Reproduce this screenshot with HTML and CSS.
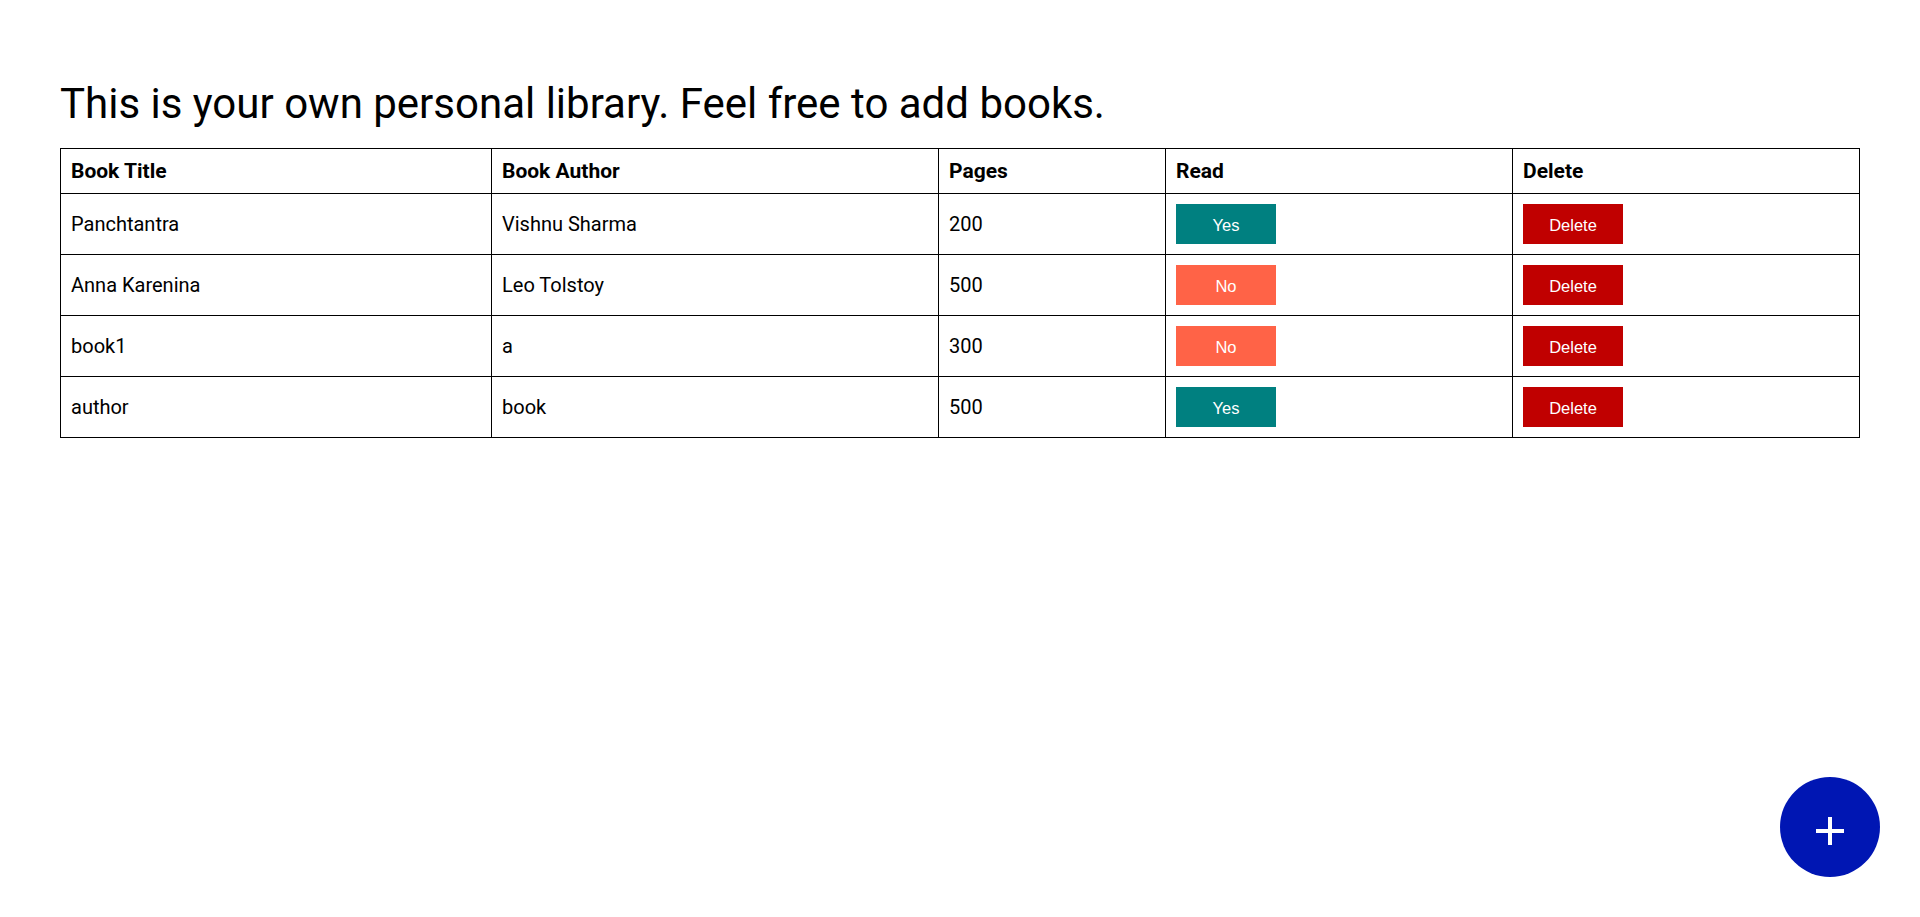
FILE: index.html
```html
<!DOCTYPE html>
<html lang="en">
<head>
<meta charset="utf-8">
<title>Library</title>
<link rel="stylesheet" href="styles.css">
</head>
<body>
<main class="page">
  <h1 class="title">This is your own personal library. Feel free to add books.</h1>
  <table class="books">
    <thead>
      <tr>
        <th class="col-title">Book Title</th>
        <th class="col-author">Book Author</th>
        <th class="col-pages">Pages</th>
        <th class="col-read">Read</th>
        <th class="col-delete">Delete</th>
      </tr>
    </thead>
    <tbody>
      <tr>
        <td>Panchtantra</td>
        <td>Vishnu Sharma</td>
        <td>200</td>
        <td><button class="btn btn-yes">Yes</button></td>
        <td><button class="btn btn-delete">Delete</button></td>
      </tr>
      <tr>
        <td>Anna Karenina</td>
        <td>Leo Tolstoy</td>
        <td>500</td>
        <td><button class="btn btn-no">No</button></td>
        <td><button class="btn btn-delete">Delete</button></td>
      </tr>
      <tr>
        <td>book1</td>
        <td>a</td>
        <td>300</td>
        <td><button class="btn btn-no">No</button></td>
        <td><button class="btn btn-delete">Delete</button></td>
      </tr>
      <tr>
        <td>author</td>
        <td>book</td>
        <td>500</td>
        <td><button class="btn btn-yes">Yes</button></td>
        <td><button class="btn btn-delete">Delete</button></td>
      </tr>
    </tbody>
  </table>
</main>
<button class="fab" aria-label="Add book">
  <svg class="fab-icon" width="30" height="30" viewBox="0 0 30 30"><path d="M15 1v28M1 15h28" stroke="#fff" stroke-width="4" fill="none"/></svg>
</button>
</body>
</html>
```
FILE: styles.css
```css
html, body {
  margin: 0;
  padding: 0;
  background: #fff;
}
body {
  font-family: Roboto, "Liberation Sans", sans-serif;
  color: #000;
}
.page {
  padding: 0 60px;
}
.title {
  font-size: 42px;
  font-weight: 400;
  line-height: 49px;
  margin: 79px 0 20px;
}
.books {
  width: 100%;
  border-collapse: collapse;
  table-layout: fixed;
  font-size: 20px;
}
.books th,
.books td {
  border: 1px solid #000;
  padding: 10px;
  text-align: left;
  vertical-align: middle;
  line-height: 24px;
}
.books th {
  font-weight: 700;
  font-size: 21px;
}
.col-title { width: 410px; }
.col-author { width: 426px; }
.col-pages { width: 206px; }
.col-read { width: 326px; }
.btn {
  display: block;
  width: 100px;
  height: 40px;
  border: none;
  color: #fff;
  font-family: "Liberation Sans", Arial, sans-serif;
  font-size: 16.5px;
  padding: 2px 0 0;
  cursor: pointer;
}
.btn-yes { background: #008080; }
.btn-no { background: #ff6347; }
.btn-delete { background: #c00000; }
.fab {
  position: fixed;
  right: 40px;
  bottom: 40px;
  width: 100px;
  height: 100px;
  border-radius: 50%;
  border: none;
  background: #0016b3;
  padding: 0;
  display: flex;
  align-items: center;
  justify-content: center;
}
.fab-icon {
  display: block;
  margin-top: 8px;
}
```
